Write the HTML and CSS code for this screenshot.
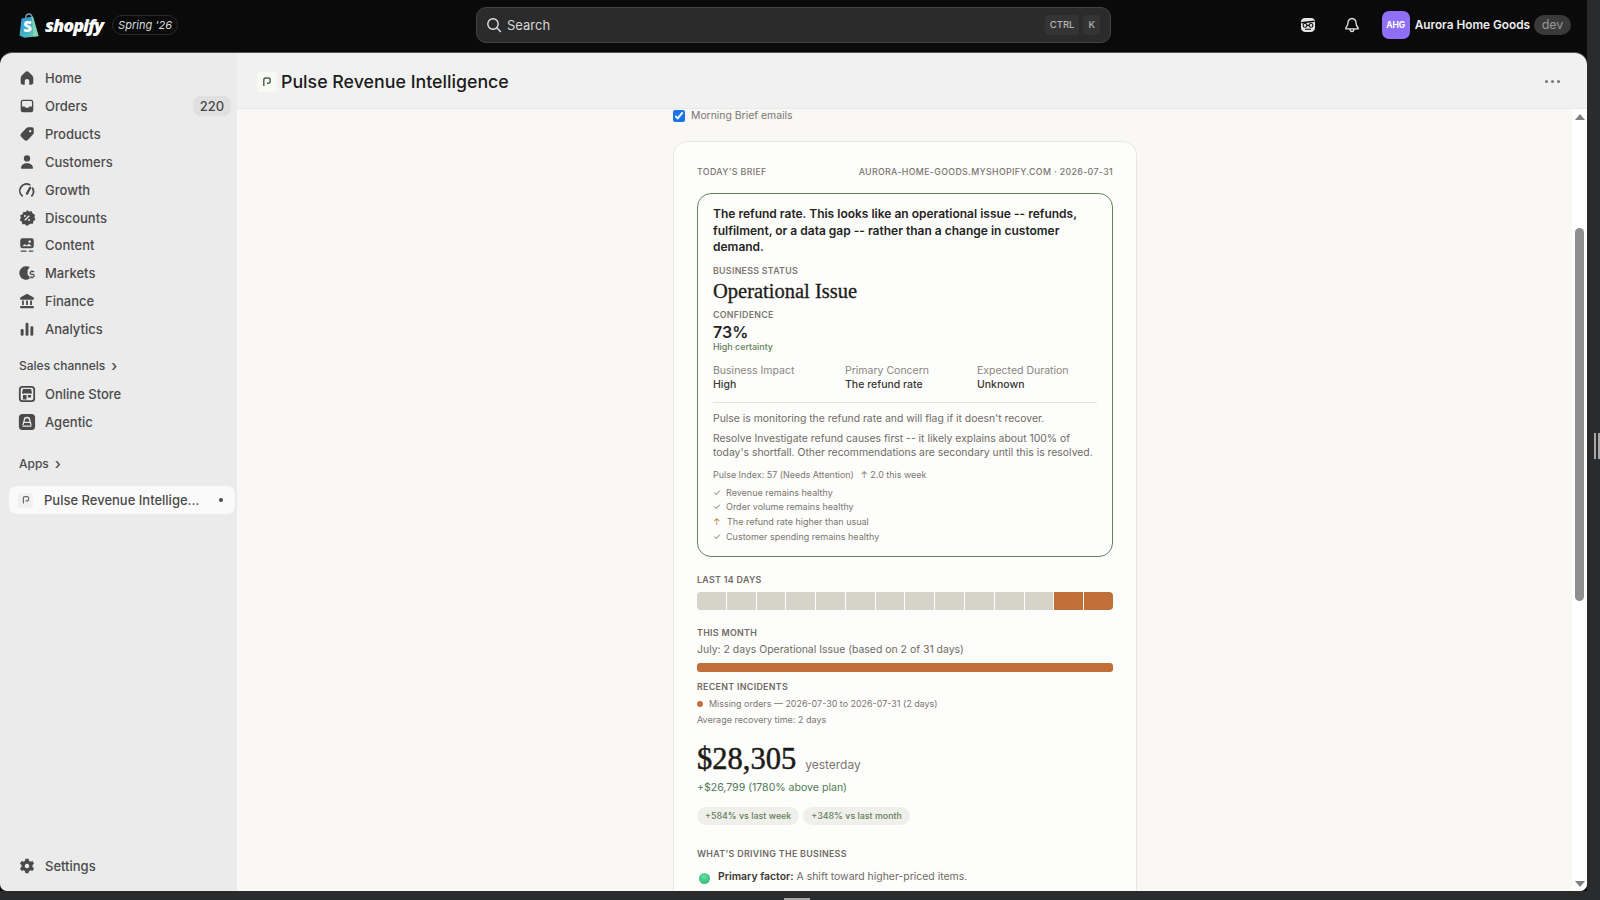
FILE: index.html
```html
<!DOCTYPE html>
<html lang="en">
<head>
    <meta charset="UTF-8">
    <meta name="viewport" content="width=device-width, initial-scale=1.0">
    <title>Shopify | Pulse Revenue Intelligence</title>
    <link rel="stylesheet" href="styles.css">
</head>
<body>
    <div class="window">
        <div class="app">
            <header class="topbar">
                <div class="brand">
                    <svg class="bag" viewBox="0 0 20 25" width="20" height="25">
                        <defs>
                            <linearGradient id="bag-fill" x1="0" y1="0" x2="1" y2="1">
                                <stop offset="0" stop-color="#2f8fd8"/>
                                <stop offset="0.6" stop-color="#46b6c4"/>
                                <stop offset="1" stop-color="#7fd6a0"/>
                            </linearGradient>
                        </defs>
                        <path d="M6.5 5.5C6.7 3 8 1 10 1s3 1.8 3.2 4.5" fill="none" stroke="#7f9fb8" stroke-width="1.3"/>
                        <path d="M2.5 5.5 14 3.6 19.5 23 5.5 24.8 0.5 22.6z" fill="url(#bag-fill)"/>
                        <path d="M14 3.6 19.5 23 14.5 24 12.8 4z" fill="#8fdcb4" opacity="0.75"/>
                        <text x="4.2" y="19" class="bag-s">S</text>
                    </svg>
                    <span class="wordmark">shopify</span>
                    <span class="edition">Spring '26</span>
                </div>
                <div class="search">
                    <svg viewBox="0 0 16 16" width="16" height="16" fill="none" stroke="#e3e3e3" stroke-width="1.4" stroke-linecap="round"><circle cx="7" cy="7" r="5.2"/><path d="M11 11l3.4 3.4"/></svg>
                    <span class="search-label">Search</span>
                    <span class="key">CTRL</span>
                    <span class="key">K</span>
                </div>
                <div class="account">
                    <svg class="top-icon" viewBox="0 0 16 16" width="16" height="16">
                        <path d="M5 1h6c2.5 0 4 1.5 4 4v5.500c0 2.800-2 4.500-4.500 4.500h-5C3 15 1 13.300 1 10.500V5c0-2.500 1.500-4 4-4z" fill="#e6e6e6"/>
                        <path d="M1.500 5.800 14.500 4.200" stroke="#0a0a0a" stroke-width="1.4"/>
                        <circle cx="5" cy="8.4" r="1.9" fill="none" stroke="#0a0a0a" stroke-width="1.1"/>
                        <circle cx="11" cy="8.4" r="1.9" fill="none" stroke="#0a0a0a" stroke-width="1.1"/>
                        <path d="M6.900 8.400h2.200M5 12.300h6" stroke="#0a0a0a" stroke-width="1.1"/>
                    </svg>
                    <svg class="top-icon bell" viewBox="0 0 16 16" width="16" height="16" fill="none" stroke="#e6e6e6" stroke-width="1.3" stroke-linejoin="round">
                        <path d="M8 1.500c-2.600 0-4 2-4 4.300 0 2.700-1.500 4-2.200 5.200-.2.400 0 .8.500.8h11.400c.5 0 .7-.4.500-.8C13 9.800 12 8.500 12 5.800c0-2.300-1.400-4.300-4-4.300z"/>
                        <path d="M6 12c0 1.600.8 2.500 2 2.500s2-.9 2-2.500"/>
                    </svg>
                    <span class="avatar">AHG</span>
                    <span class="shop-name">Aurora Home Goods</span>
                    <span class="dev-pill">dev</span>
                </div>
            </header>

            <div class="panel">
                <nav class="sidebar">
                    <a class="nav-item"><svg viewBox="0 0 20 20"><path d="M10 2.500c-.8 0-1.500.4-2.100 1L4.200 7.200c-.8.800-1.200 1.600-1.200 2.800v5c0 1.400 1 2.500 2.500 2.500H7.500v-4a2.500 2.500 0 0 1 5 0v4h2c1.500 0 2.500-1.100 2.500-2.500v-5c0-1.200-.4-2-1.200-2.800l-3.700-3.700c-.6-.6-1.300-1-2.100-1z"/></svg>Home</a>
                    <a class="nav-item"><svg viewBox="0 0 20 20"><path fill-rule="evenodd" d="M5.500 3h9A2.500 2.500 0 0 1 17 5.500v9a2.500 2.500 0 0 1-2.500 2.500h-9A2.500 2.500 0 0 1 3 14.500v-9A2.500 2.500 0 0 1 5.500 3zm-1 7.500h3l1 1.500h3l1-1.500h3v-5a1 1 0 0 0-1-1h-9a1 1 0 0 0-1 1z"/></svg>Orders<span class="count">220</span></a>
                    <a class="nav-item"><svg viewBox="0 0 20 20"><path fill-rule="evenodd" d="M11.500 2.500h4A2 2 0 0 1 17.500 4.500v4a3 3 0 0 1-.9 2.100l-5.500 5.800a3 3 0 0 1-4.300 0l-3-3a3 3 0 0 1 0-4.300l5.600-5.700a3 3 0 0 1 2.100-.9zm2 3a1.300 1.300 0 1 0 .01 0z"/></svg>Products</a>
                    <a class="nav-item"><svg viewBox="0 0 20 20"><circle cx="10" cy="6" r="3.5"/><path d="M3.500 17.500v-1.300c0-2.900 2.900-4.700 6.500-4.700s6.500 1.800 6.500 4.700v1.300z"/></svg>Customers</a>
                    <a class="nav-item"><svg viewBox="0 0 20 20" fill="none" stroke="#4a4a4a" stroke-width="2" stroke-linecap="round"><path d="M4.600 16.500A7.500 7.500 0 0 1 13 4.200M16.200 8a7.500 7.500 0 0 1-.8 8.500"/><path d="M13.500 7.500 10 14" stroke-width="2.6"/></svg>Growth</a>
                    <a class="nav-item"><svg viewBox="0 0 20 20"><path d="M10 1l2.300 1.700 2.900-.3 1.100 2.700 2.600 1.300-.7 2.800 1.200 2.600-2.300 1.700-.6 2.800-2.900.1L10 19l-2.300-2-2.900-.1-.6-2.800-2.300-1.700 1.200-2.600-.7-2.800 2.600-1.300 1.100-2.700 2.900.3z"/><path d="M7.500 12.500l5-5" stroke="#ebebeb" stroke-width="1.5"/><circle cx="7.700" cy="7.800" r="1.1" fill="#ebebeb"/><circle cx="12.300" cy="12.200" r="1.1" fill="#ebebeb"/></svg>Discounts</a>
                    <a class="nav-item"><svg viewBox="0 0 20 20"><path fill-rule="evenodd" d="M5 2.500h10A2.500 2.500 0 0 1 17.500 5v6a2.500 2.500 0 0 1-2.500 2.500H5A2.500 2.500 0 0 1 2.500 11V5A2.500 2.500 0 0 1 5 2.500zM4.500 11.500h11l-3.500-3-2.500 2-2-1.200zM13 4.800a1.400 1.400 0 1 0 .01 0z"/><path d="M3 16h6.500v1.500H3zM12 16h5v1.500h-5z"/></svg>Content</a>
                    <a class="nav-item"><svg viewBox="0 0 20 20"><path d="M9.500 2.500a7.500 7.500 0 0 1 3.500.9l-1 1.700c-.8.700-1.500 1.500-1.300 2.800l-.2 2.600c.2 1.400 1 2.500 2 3.100l.5 2.700a7.500 7.500 0 1 1-3.500-13.800z"/><path d="M18 8.500h-3a1.400 1.400 0 0 0 0 3h1.500a1.400 1.400 0 0 1 0 3h-3.300M15.500 7v1.500M15.500 14.500V16" fill="none" stroke="#4a4a4a" stroke-width="1.4"/></svg>Markets</a>
                    <a class="nav-item"><svg viewBox="0 0 20 20"><path d="M10 2 2.500 6.200V8.500h15V6.200z"/><path d="M4.500 9.500h2v5h-2zM9 9.500h2v5H9zM13.500 9.500h2v5h-2zM2.500 15.500h15V18h-15z"/></svg>Finance</a>
                    <a class="nav-item"><svg viewBox="0 0 20 20"><rect x="3" y="10" width="3.2" height="7.500" rx="1.4"/><rect x="8.4" y="3" width="3.2" height="14.500" rx="1.4"/><rect x="13.8" y="7" width="3.2" height="10.500" rx="1.4"/></svg>Analytics</a>

                    <div class="nav-heading first">Sales channels<span class="chev">›</span></div>
                    <a class="nav-item"><svg viewBox="0 0 20 20"><path fill-rule="evenodd" d="M5 1h10a4 4 0 0 1 4 4v10a4 4 0 0 1-4 4H5a4 4 0 0 1-4-4V5a4 4 0 0 1 4-4zm0 2a2 2 0 0 0-2 2v10a2 2 0 0 0 2 2h10a2 2 0 0 0 2-2V5a2 2 0 0 0-2-2z"/><path d="M5.500 4.500h9l1 4a1.800 1.800 0 0 1-2.800.7 2.400 2.400 0 0 1-2.700 0 2.400 2.400 0 0 1-2.700 0 1.800 1.800 0 0 1-2.800-.7z"/><path d="M5.500 11h4v5h-4zM11 11h3.500v3H11z"/></svg>Online Store</a>
                    <a class="nav-item"><svg viewBox="0 0 20 20"><rect x="1" y="1" width="18" height="18" rx="4"/><path d="M10 5a3 3 0 0 1 3 3l1.600 5.400M10 5a3 3 0 0 0-3 3l-1.600 5.400M5 14.500h10M7 10.500h6" fill="none" stroke="#ebebeb" stroke-width="1.4"/></svg>Agentic</a>

                    <div class="nav-heading second">Apps<span class="chev">›</span></div>
                    <a class="nav-item active"><span class="app-mark"><svg viewBox="0 0 14 14" fill="none" stroke="#6b6b6b" stroke-width="1.4"><path d="M4 11V4.500A1.500 1.500 0 0 1 5.500 3h3A1.500 1.500 0 0 1 10 4.500v2A1.500 1.500 0 0 1 8.500 8H6.500"/></svg></span>Pulse Revenue Intellige...<span class="pin"></span></a>

                    <a class="nav-item settings"><svg viewBox="0 0 20 20"><path fill-rule="evenodd" d="M8.300 2h3.400l.5 2.300 1.700 1 2.200-.8 1.700 3-1.700 1.500v2l1.700 1.500-1.700 3-2.200-.8-1.700 1-.5 2.300H8.300l-.5-2.300-1.700-1-2.200.8-1.700-3L3.900 11V9L2.200 7.500l1.700-3 2.200.8 1.700-1zM10 7.500a2.500 2.500 0 1 0 .01 0z"/></svg>Settings</a>
                </nav>

                <main class="main">
                    <div class="page-header">
                        <span class="page-icon"><svg viewBox="0 0 20 20" fill="none" stroke="#47604a" stroke-width="1.8"><path d="M6 15V7.500A2.500 2.500 0 0 1 8.500 5h3A2.500 2.500 0 0 1 14 7.500V9a2.500 2.500 0 0 1-2.500 2.500H10"/></svg></span>
                        <h1>Pulse Revenue Intelligence</h1>
                        <span class="page-menu"><i></i><i></i><i></i></span>
                    </div>
                    <div class="page-body">
                        <div class="scroll-area">
                            <div class="column">
                                <label class="brief-toggle"><input type="checkbox" checked> Morning Brief emails</label>
                                <section class="card">
                                    <div class="card-top">
                                        <span>TODAY'S BRIEF</span>
                                        <span>AURORA-HOME-GOODS.MYSHOPIFY.COM · 2026-07-31</span>
                                    </div>
                                    <div class="hero">
                                        <p class="hero-title">The refund rate. This looks like an operational issue -- refunds, fulfilment, or a data gap -- rather than a change in customer demand.</p>
                                        <div class="label status-label">BUSINESS STATUS</div>
                                        <div class="status">Operational Issue</div>
                                        <div class="label conf-label">CONFIDENCE</div>
                                        <div class="conf">73%</div>
                                        <div class="certainty">High certainty</div>
                                        <div class="facts">
                                            <div><span>Business Impact</span><b>High</b></div>
                                            <div><span>Primary Concern</span><b>The refund rate</b></div>
                                            <div><span>Expected Duration</span><b>Unknown</b></div>
                                        </div>
                                        <hr class="rule">
                                        <p class="note first-note">Pulse is monitoring the refund rate and will flag if it doesn't recover.</p>
                                        <p class="note second-note">Resolve Investigate refund causes first -- it likely explains about 100% of today's shortfall. Other recommendations are secondary until this is resolved.</p>
                                        <p class="index-line">Pulse Index: 57 (Needs Attention) <span>↑ 2.0 this week</span></p>
                                        <ul class="checks">
                                            <li><span class="ok">✓</span>Revenue remains healthy</li>
                                            <li><span class="ok">✓</span>Order volume remains healthy</li>
                                            <li><span class="up">↑</span>The refund rate higher than usual</li>
                                            <li><span class="ok">✓</span>Customer spending remains healthy</li>
                                        </ul>
                                    </div>

                                    <div class="section-label days-label">LAST 14 DAYS</div>
                                    <div class="days" id="days"></div>

                                    <div class="section-label month-label">THIS MONTH</div>
                                    <p class="month-text">July: 2 days Operational Issue (based on 2 of 31 days)</p>
                                    <div class="month-bar"></div>

                                    <div class="section-label incident-label">RECENT INCIDENTS</div>
                                    <p class="incident"><span class="dot"></span>Missing orders — 2026-07-30 to 2026-07-31 (2 days)</p>
                                    <p class="recovery">Average recovery time: 2 days</p>

                                    <div class="revenue"><span class="amount">$28,305</span><span class="when">yesterday</span></div>
                                    <p class="vs-plan">+$26,799 (1780% above plan)</p>
                                    <div class="pills">
                                        <span>+584% vs last week</span>
                                        <span>+348% vs last month</span>
                                    </div>

                                    <div class="section-label driving-label">WHAT'S DRIVING THE BUSINESS</div>
                                    <p class="factor"><span class="green-dot"></span><b>Primary factor:</b> A shift toward higher-priced items.</p>
                                </section>
                            </div>
                        </div>
                        <div class="scrollbar">
                            <span class="arrow-up"></span>
                            <span class="thumb"></span>
                            <span class="arrow-down"></span>
                        </div>
                    </div>
                </main>
            </div>
        </div>
        <div class="rail-right"><span></span><span></span></div>
    </div>
    <div class="rail-bottom"><span></span></div>

    <script>
        const days = document.getElementById("days");
        for (let i = 0; i < 14; i++) {
            const day = document.createElement("span");
            if (i >= 12) {
                day.classList.add("bad");
            }
            days.appendChild(day);
        }
    </script>
</body>
</html>
```

FILE: styles.css
```css
* {
    box-sizing: border-box;
}

body {
    margin: 0;
    height: 900px;
    overflow: hidden;
    font-family: Inter, "Liberation Sans", sans-serif;
    background-color: #2a2b2d;
    color: #303030;
}

p, h1, ul {
    margin: 0;
    padding: 0;
}

.window {
    display: flex;
    height: 891px;
}

.app {
    flex: 1;
    min-width: 0;
    display: flex;
    flex-direction: column;
    background-color: #0a0a0a;
}

/* Top bar */
.topbar {
    display: grid;
    grid-template-columns: 1fr 635px 1fr;
    align-items: center;
    height: 53px;
    padding-bottom: 3px;
    flex-shrink: 0;
}

.brand {
    display: flex;
    align-items: center;
    padding-left: 19px;
}

.bag-s {
    font-family: "Open Sans", sans-serif;
    font-size: 15px;
    font-weight: 800;
    fill: #fff;
}

.wordmark {
    margin-left: 6px;
    font-family: "Open Sans", sans-serif;
    font-size: 18px;
    font-weight: 800;
    font-style: italic;
    letter-spacing: -1px;
    color: #fff;
}

.edition {
    margin-left: 9px;
    height: 20px;
    padding: 0 5px;
    border: 1px solid #2a2a2a;
    border-radius: 10px;
    font-size: 11px;
    line-height: 18px;
    font-style: italic;
    color: #d9d9d9;
}

.search {
    display: flex;
    align-items: center;
    gap: 4px;
    height: 36px;
    padding: 0 10px 0 9px;
    background-color: #2b2b2b;
    border: 1px solid #434343;
    border-radius: 10px;
}

.search-label {
    flex: 1;
    margin-left: 1px;
    font-size: 13px;
    color: #d8d8d8;
}

.key {
    height: 20px;
    padding: 0 5px;
    background-color: #343434;
    border-radius: 4px;
    font-size: 9.5px;
    font-weight: 500;
    line-height: 20px;
    color: #b5b5b5;
}

.account {
    display: flex;
    align-items: center;
    justify-content: flex-end;
    padding-right: 16px;
}

.top-icon {
    margin-right: 28px;
}

.top-icon.bell {
    margin-right: 22px;
}

.avatar {
    display: flex;
    align-items: center;
    justify-content: center;
    width: 28px;
    height: 28px;
    background-color: #8f6ff7;
    border-radius: 7px;
    font-size: 8.5px;
    font-weight: 700;
    color: #fff;
}

.shop-name {
    margin-left: 5px;
    font-size: 11.8px;
    font-weight: 600;
    color: #eee;
}

.dev-pill {
    margin-left: 4px;
    width: 37px;
    height: 20px;
    background-color: #3a3a3a;
    border-radius: 10px;
    font-size: 12.5px;
    line-height: 20px;
    text-align: center;
    color: #999;
}

/* Panel */
.panel {
    flex: 1;
    min-height: 0;
    display: flex;
    border-radius: 12px 12px 7px 7px;
    overflow: hidden;
    box-shadow: 0 -1px 0 #555;
}

.sidebar {
    display: flex;
    flex-direction: column;
    flex-shrink: 0;
    width: 237px;
    padding: 11.5px 2px 11px 9px;
    background-color: #ebebeb;
}

.nav-item {
    position: relative;
    display: flex;
    align-items: center;
    flex-shrink: 0;
    height: 27.85px;
    padding-left: 9px;
    font-size: 13px;
    font-weight: 500;
    color: #4a4a4a;
}

.nav-item svg {
    flex-shrink: 0;
    width: 18px;
    height: 18px;
    margin-right: 9px;
    fill: #4a4a4a;
}

.nav-item svg[fill="none"] {
    fill: none;
}

.count {
    position: absolute;
    top: 4px;
    right: 4px;
    width: 38px;
    height: 20px;
    background-color: #e0e0e0;
    border-radius: 8px;
    font-size: 13px;
    line-height: 20px;
    text-align: center;
}

.nav-heading {
    display: flex;
    align-items: center;
    height: 20px;
    padding-left: 10px;
    font-size: 12px;
    font-weight: 500;
    color: #4a4a4a;
}

.nav-heading.first {
    margin-top: 13px;
    margin-bottom: 4.5px;
}

.nav-heading.second {
    margin-top: 17.5px;
    margin-bottom: 12.5px;
}

.chev {
    margin-left: 6px;
    font-size: 15px;
    line-height: 16px;
}

.nav-item.active {
    background-color: #fafafa;
    border-radius: 8px;
}

.app-mark {
    display: flex;
    align-items: center;
    justify-content: center;
    flex-shrink: 0;
    width: 15px;
    height: 15px;
    margin-right: 11px;
    background-color: #f1f1f1;
    border-radius: 3px;
}

.app-mark svg {
    width: 12px;
    height: 12px;
    margin: 0;
}

.pin {
    position: absolute;
    top: 12px;
    right: 12px;
    width: 4px;
    height: 4px;
    background-color: #4a4a4a;
    border-radius: 50%;
}

.nav-item.settings {
    margin-top: auto;
}

.main {
    flex: 1;
    min-width: 0;
    display: flex;
    flex-direction: column;
}

.page-header {
    display: flex;
    align-items: center;
    flex-shrink: 0;
    height: 56px;
    padding: 2px 27px 0 20px;
    background-color: #f1f1f1;
    border-bottom: 1px solid #e8e8e8;
}

.page-icon {
    display: flex;
    align-items: center;
    justify-content: center;
    width: 20px;
    height: 20px;
    background-color: #f9f8f3;
    border-radius: 4px;
}

.page-icon svg {
    width: 16px;
    height: 16px;
}

h1 {
    flex: 1;
    margin-left: 4px;
    font-size: 17.8px;
    font-weight: 500;
    color: #1c1c1c;
}

.page-menu {
    display: flex;
    gap: 3px;
}

.page-menu i {
    width: 3px;
    height: 3px;
    background-color: #777;
    border-radius: 50%;
}

.page-body {
    flex: 1;
    min-height: 0;
    display: flex;
    background-color: #f9f8f5;
}

.scroll-area {
    flex: 1;
    min-width: 0;
    overflow: hidden;
    display: flex;
    justify-content: center;
    padding-left: 1px;
}

.column {
    width: 464px;
    flex-shrink: 0;
}

.brief-toggle {
    display: flex;
    align-items: center;
    height: 12px;
    font-size: 10.4px;
    color: #7a7672;
}

.brief-toggle input {
    width: 12px;
    height: 12px;
    margin: 2px 6px 0 0;
    accent-color: #1a73e8;
}

/* Brief card */
.card {
    margin-top: 20px;
    padding: 24px 23px 30px;
    background-color: #fdfdfb;
    border: 1px solid #e8e6e1;
    border-radius: 14px;
}

.card-top {
    display: flex;
    justify-content: space-between;
    font-size: 8.8px;
    font-weight: 500;
    line-height: 12px;
    letter-spacing: 0.35px;
    color: #7b7670;
}

.hero {
    margin-top: 15px;
    padding: 12px 15px 11px;
    border: 1.5px solid #66845c;
    border-radius: 14px;
}

.hero-title {
    font-size: 12px;
    font-weight: 600;
    line-height: 16.5px;
    color: #26241f;
}

.label {
    font-size: 8.8px;
    font-weight: 600;
    line-height: 12px;
    letter-spacing: 0.3px;
    color: #7b7670;
}

.status-label {
    margin-top: 9px;
}

.status {
    margin-top: 2px;
    font-family: "Liberation Serif", serif;
    font-size: 20.5px;
    line-height: 24px;
    -webkit-text-stroke: 0.3px #1c1b18;
    color: #1c1b18;
}

.conf-label {
    margin-top: 6px;
}

.conf {
    margin-top: 1px;
    font-size: 16px;
    font-weight: 600;
    line-height: 20px;
    color: #26241f;
}

.certainty {
    margin-top: -0.5px;
    font-size: 8.9px;
    font-weight: 500;
    line-height: 12px;
    color: #5f7f58;
}

.facts {
    display: grid;
    grid-template-columns: repeat(3, 1fr);
    gap: 12px;
    margin-top: 10.5px;
    font-size: 10.5px;
    line-height: 14.5px;
}

.facts span {
    display: block;
    color: #8a8580;
}

.facts b {
    font-weight: 500;
    color: #3a3833;
}

.rule {
    height: 1px;
    margin: 9.5px 0 0;
    background-color: #e5e3de;
    border: none;
}

.note {
    font-size: 10.4px;
    line-height: 14px;
    color: #6f6b66;
}

.first-note {
    margin-top: 8.5px;
}

.second-note {
    margin-top: 6px;
}

.index-line {
    margin-top: 8px;
    font-size: 8.95px;
    line-height: 13px;
    color: #7b7670;
}

.index-line span {
    margin-left: 4px;
}

.checks {
    margin-top: 5px;
    list-style: none;
    font-size: 9px;
    line-height: 14.8px;
    color: #7b7670;
}

.checks span {
    display: inline-block;
    width: 13px;
}

.checks .up {
    width: 14px;
    color: #c47a3c;
}

.section-label {
    font-size: 8.9px;
    font-weight: 600;
    line-height: 12px;
    letter-spacing: 0.3px;
    color: #6f6a64;
}

.days-label {
    margin-top: 17px;
}

.days {
    display: flex;
    gap: 1px;
    height: 18px;
    margin-top: 6px;
    border-radius: 4px;
    overflow: hidden;
}

.days span {
    flex: 1;
    background-color: #d6d3c8;
}

.days .bad {
    background-color: #c06f38;
}

.month-label {
    margin-top: 17.5px;
}

.month-text {
    margin-top: 4px;
    font-size: 10.45px;
    line-height: 14px;
    color: #6f6b66;
}

.month-bar {
    height: 9px;
    margin-top: 6px;
    background-color: #c06f38;
    border-radius: 3px;
}

.incident-label {
    margin-top: 8.5px;
}

.incident {
    display: flex;
    align-items: center;
    margin-top: 4.5px;
    font-size: 8.95px;
    line-height: 13px;
    color: #7b7670;
}

.dot {
    width: 6px;
    height: 6px;
    margin-right: 6px;
    background-color: #c06f38;
    border-radius: 50%;
}

.recovery {
    margin-top: 3px;
    font-size: 9px;
    line-height: 13px;
    color: #7b7670;
}

.revenue {
    display: flex;
    align-items: baseline;
    margin-top: 15px;
}

.amount {
    font-family: "Liberation Serif", serif;
    font-size: 30.5px;
    line-height: 36px;
    -webkit-text-stroke: 0.5px #1c1b18;
    color: #1c1b18;
}

.when {
    margin-left: 9px;
    font-size: 12px;
    color: #7b7670;
}

.vs-plan {
    margin-top: 4px;
    font-size: 10.55px;
    line-height: 14px;
    color: #4f7a58;
}

.pills {
    display: flex;
    gap: 4px;
    margin-top: 11.7px;
}

.pills span {
    height: 18.3px;
    padding: 0 8px;
    background-color: #f1efec;
    border-radius: 9px;
    font-size: 8.9px;
    font-weight: 500;
    line-height: 18.3px;
    color: #5f7f58;
}

.driving-label {
    margin-top: 23px;
}

.factor {
    display: flex;
    align-items: center;
    margin-top: 9px;
    font-size: 10.45px;
    line-height: 16px;
    color: #6f6b66;
}

.factor b {
    margin-right: 3px;
    font-weight: 600;
    color: #3a3833;
}

.green-dot {
    width: 11px;
    height: 11px;
    margin: 2px 8px 0 2px;
    background: radial-gradient(circle at 45% 35%, #5fe39a, #2fa878);
    border-radius: 50%;
}

/* Scrollbar */
.scrollbar {
    position: relative;
    flex-shrink: 0;
    width: 15px;
    background-color: #fff;
    border-bottom-right-radius: 7px;
}

.thumb {
    position: absolute;
    top: 119px;
    left: 3px;
    width: 9px;
    height: 373px;
    background-color: #8f8f8f;
    border-radius: 4.5px;
}

.arrow-up,
.arrow-down {
    position: absolute;
    left: 2.5px;
    border-left: 5px solid transparent;
    border-right: 5px solid transparent;
}

.arrow-up {
    top: 5px;
    border-bottom: 6px solid #808080;
}

.arrow-down {
    bottom: 4px;
    border-top: 6px solid #808080;
}

/* Window edges */
.rail-right {
    display: flex;
    gap: 2px;
    justify-content: flex-end;
    align-items: center;
    flex-shrink: 0;
    width: 13px;
    background-color: #2a2b2d;
}

.rail-right span {
    width: 2px;
    height: 26px;
    background-color: #a8a8a8;
}

.rail-bottom {
    display: flex;
    align-items: flex-end;
    justify-content: center;
    height: 9px;
    padding-right: 6px;
    background-color: #2a2b2d;
}

.rail-bottom span {
    width: 26px;
    height: 2px;
    background-color: #a8a8a8;
}
```
